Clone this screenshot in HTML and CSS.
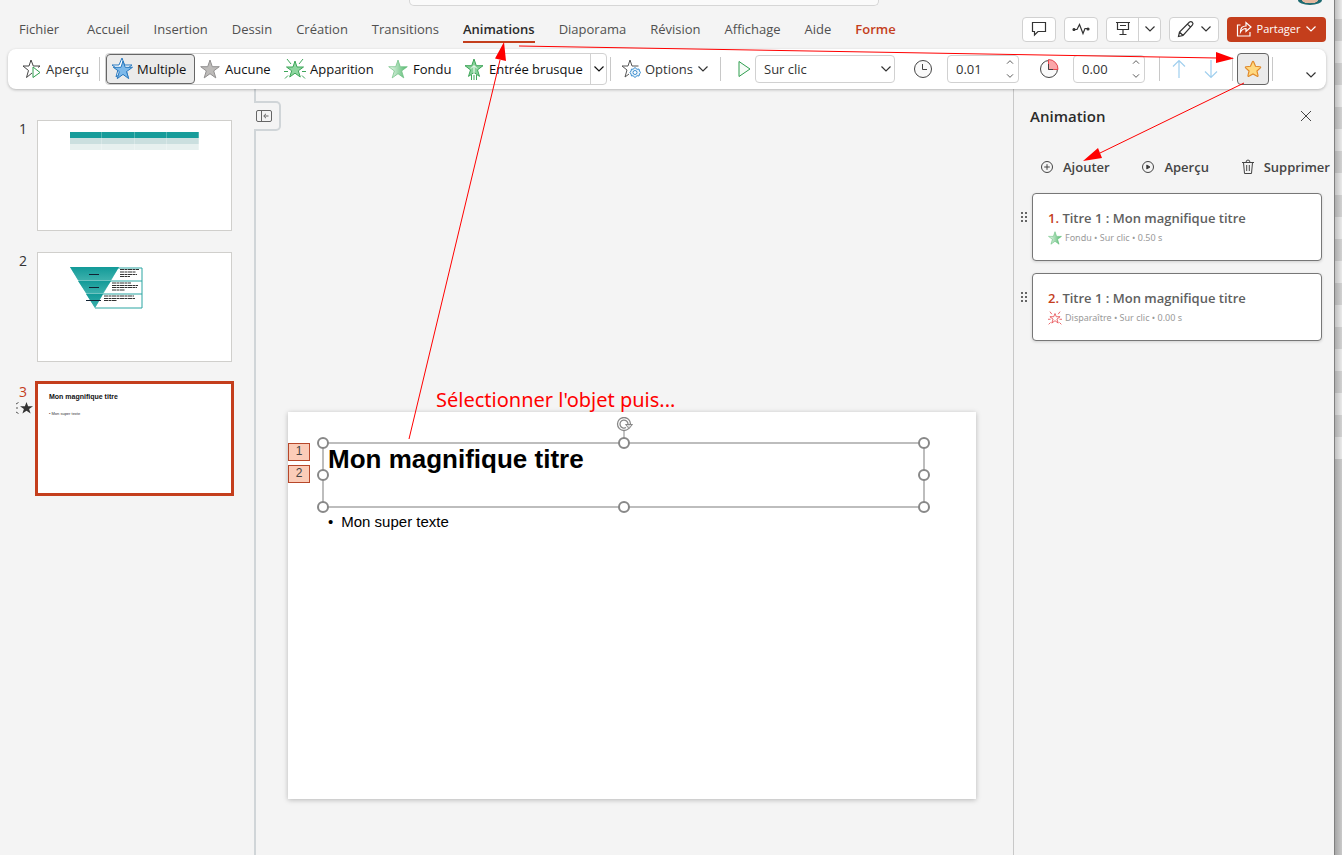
FILE: index.html
```html
<!DOCTYPE html>
<html lang="fr">
<head>
<meta charset="utf-8">
<title>Animations</title>
<link rel="stylesheet" href="styles.css">
</head>
<body>
<svg class="defs" aria-hidden="true">
  <defs>
    <linearGradient id="fade"><stop offset="0" stop-color="#f2faf3"/><stop offset="1" stop-color="#4fb86a"/></linearGradient>
    <linearGradient id="teal" x1="0" y1="0" x2="0" y2="1"><stop offset="0" stop-color="#129a98"/><stop offset="1" stop-color="#3cb0ac"/></linearGradient>
    <symbol id="star" viewBox="0 0 20 20"><path d="M10 1l2.300 6.700H19.300l-5.600 4.200 2.100 7L10 14.700l-5.800 4.200 2.100-7L.7 7.700H7.700z"/></symbol>
    <symbol id="chevron" viewBox="0 0 12 12"><path d="M1.500 3.500L6 8l4.500-4.500" fill="none" stroke="currentColor" stroke-width="1.200"/></symbol>
    <symbol id="grip" viewBox="0 0 8 12"><path d="M1 1h2v2H1zM5 1h2v2H5zM1 5h2v2H1zM5 5h2v2H5zM1 9h2v2H1zM5 9h2v2H5z" fill="#666"/></symbol>
  </defs>
</svg>

<div class="app">
  <header class="top">
    <div class="title-bar"><div class="search"></div><div class="avatar"></div></div>
    <div class="menu">
      <nav class="tabs">
        <a class="first" href="#">Fichier</a><a href="#">Accueil</a><a href="#">Insertion</a><a href="#">Dessin</a><a href="#">Création</a><a href="#">Transitions</a><a class="active" href="#">Animations</a><a href="#">Diaporama</a><a href="#">Révision</a><a href="#">Affichage</a><a href="#">Aide</a><a class="context" href="#">Forme</a>
      </nav>
      <div class="actions">
        <button class="btn" aria-label="Commentaires"><svg width="16" height="16" viewBox="0 0 16 16"><path d="M1.500 1.500h13v9H7l-3.500 3.500v-3.500h-2z"/></svg></button>
        <button class="btn" aria-label="Activité"><svg width="18" height="16" viewBox="0 0 18 16"><path d="M2 8.500h3l2.500-5 3.500 9 2-5h3"/><circle cx="2" cy="8.500" r="1" fill="#333"/><circle cx="16" cy="8" r="1" fill="#333"/></svg></button>
        <div class="split">
          <button aria-label="Présenter"><svg width="16" height="16" viewBox="0 0 16 16"><path d="M1 1.500h14M2.500 1.500V8.500h11V1.500M5 4.500h6M8 8.500v5M4.500 13.500h7"/></svg></button>
          <button class="drop" aria-label="Options de présentation"><svg width="12" height="12"><use href="#chevron"/></svg></button>
        </div>
        <button class="btn edit" aria-label="Édition"><svg width="18" height="18" viewBox="0 0 18 18"><path d="M1.500 16.500l1-4.500L12.500 2q1.500-1 2.800.2t.2 2.800L6 15.500zM10.500 4l3.300 3.300M2.500 12l3.500 3.500"/></svg><svg width="12" height="12"><use href="#chevron"/></svg></button>
        <button class="share"><svg width="16" height="16" viewBox="0 0 16 16"><path d="M4.500 4H1.500v11h12.500V11M4.500 11q0-6 5.500-6V1.500L15 6l-5 4.500V7.500q-3.500 0-5.500 3.500z"/></svg>Partager<svg width="12" height="12"><use href="#chevron"/></svg></button>
      </div>
    </div>
  </header>

  <div class="ribbon">
    <button class="tool preview"><svg width="20" height="20" viewBox="0 0 20 20"><path d="M9 1l2.300 6H18l-2 1.500M10 14l-5.500 4.500 2-7L1 7h6l2-6" fill="none" stroke="#444"/><path d="M11 8v10.500l7-5z" fill="#fff" stroke="#2f9e4f"/></svg>Aperçu</button>
    <span class="rule"></span>
    <div class="gallery">
      <button class="selected"><svg class="blue" width="22" height="22" viewBox="0 0 22 22"><g fill="#7db9ea" stroke="#2878be"><path d="M11 0l2.500 7H21l-6 4.500 2 7.500-6-4.500L5 19l2-7.500L1 7h7z" fill="#fff"/><path d="M12 3l2.200 6.300H21.500l-6 4.300 2.200 7-5.700-4.200-5.700 4.200 2-7-6-4.300H10z"/></g></svg>Multiple</button>
      <button><svg class="grey" width="20" height="20"><use href="#star"/></svg>Aucune</button>
      <button class="wide"><svg width="22" height="22" viewBox="0 0 22 22"><path d="M11 3l2 6h6.500l-5.200 3.800 2 6.200-5.300-3.800L5.700 19l2-6.200L2.500 9H9z" fill="#8fd6a0" stroke="#3fa65a"/><path d="M3 1l4 5M19 1l-4 5M0 13.500h4M22 13.500h-4M1 20.500l3-3M21 20.500l-3-3" fill="none" stroke="#3fa65a"/></svg>Apparition</button>
      <button class="narrow"><svg class="fade" width="20" height="20"><use href="#star"/></svg>Fondu</button>
      <button class="long"><svg width="20" height="22" viewBox="0 0 20 22"><path d="M10 1l2.300 6.700H19l-5.500 4.200 2 6.500L10 14.500l-5.500 3.900 2-6.500L1 7.700h6.700z" fill="#86d199" stroke="#3fa65a"/><path d="M10 15V8M7 10.500L10 7.500l3 3" fill="none" stroke="#fff"/><path d="M7.500 17v5M10 17v5M12.500 17v5" stroke="#3fa65a"/></svg>Entrée brusque</button>
      <button class="more" aria-label="Plus d'animations"><svg width="12" height="12"><use href="#chevron"/></svg></button>
    </div>
    <span class="rule close"></span>
    <button class="tool options"><svg width="20" height="20" viewBox="0 0 20 20"><path d="M17.500 7H11L9 1 7 7H1l5 4-2 7 4-3" fill="none" stroke="#555"/><path d="M10.500 10l1.500.3 2-1.800 2 1.800 2-.3.500 2 1 1.500-1 1.500-.5 2-2-.3-2 1.800-2-1.800-1.500.3-.5-2-1-1.500 1-1.500z" fill="#e9f4fc" stroke="#3c8ecf"/><circle cx="14" cy="13.500" r="2" fill="#fff" stroke="#3c8ecf"/></svg>Options<svg width="12" height="12"><use href="#chevron"/></svg></button>
    <span class="rule"></span>
    <div class="start">
      <svg width="13" height="18" viewBox="0 0 13 18"><path d="M1 1.500v15L12 9z" fill="#f6fcf7" stroke="#2f9e4f"/></svg>
      <span class="select"><select aria-label="Début"><option>Sur clic</option></select><svg width="12" height="12"><use href="#chevron"/></svg></span>
    </div>
    <label class="timing"><svg width="20" height="20" viewBox="0 0 20 20"><circle cx="10" cy="10" r="8.500" fill="#fafafa" stroke="#444"/><path d="M9.500 5v5.500H14" fill="none" stroke="#444"/></svg>
      <span class="number"><input aria-label="Durée" value="0.01"><span class="spin"><svg class="up" width="8" height="8"><use href="#chevron"/></svg><svg width="8" height="8"><use href="#chevron"/></svg></span></span></label>
    <label class="timing"><svg width="20" height="20" viewBox="0 0 20 20"><circle cx="10" cy="10" r="8.500" fill="#fafafa" stroke="#444"/><path d="M9.500.5a9.500 9.500 0 0 1 9.500 10H9.500z" fill="#fba6a9" stroke="#e8474f"/><path d="M9.500 5v5.500H14" fill="none" stroke="#444"/></svg>
      <span class="number"><input aria-label="Délai" value="0.00"><span class="spin"><svg class="up" width="8" height="8"><use href="#chevron"/></svg><svg width="8" height="8"><use href="#chevron"/></svg></span></span></label>
    <span class="rule"></span>
    <div class="moves">
      <button aria-label="Monter"><svg width="14" height="20" viewBox="0 0 14 20"><path d="M7 19V1.500M1 7.500l6-6 6 6"/></svg></button>
      <button aria-label="Descendre"><svg width="14" height="20" viewBox="0 0 14 20"><path d="M7 1v17.500M1 12.500l6 6 6-6"/></svg></button>
    </div>
    <span class="rule close"></span>
    <button class="pane-toggle" aria-label="Volet Animation"><svg width="18" height="18" viewBox="0 0 20 20"><path d="M10 1.500q.5 0 .8.700l2 4.800 5 .5q1.200.2.400 1.200l-3.800 3.500 1.200 5.200q.1 1.200-1 .7L10 15.500l-4.600 2.600q-1.100.5-1-.7l1.200-5.200-3.800-3.500q-.8-1 .4-1.200l5-.5 2-4.800q.3-.7.8-.7z" fill="#ffd980" stroke="#e08a2c" stroke-width="1.300"/></svg></button>
    <span class="rule close"></span>
    <button class="collapse" aria-label="Réduire le ruban"><svg width="12" height="12"><use href="#chevron"/></svg></button>
  </div>

  <main class="work">
    <aside class="slides">
      <div class="item"><span class="index">1</span>
        <div class="thumb"><div class="mini-table"><i></i><i></i><i></i><i></i></div></div></div>
      <div class="item"><span class="index">2</span>
        <div class="thumb"><svg class="pyramid" width="73" height="43" viewBox="0 0 73 43">
          <path d="M48 1h24v40H25" fill="#fff" stroke="#2ba5a2"/><path d="M36 14h36M31 27h41" stroke="#2ba5a2"/>
          <path d="M0 0h49L25 41z" fill="#6fc3c0"/><path d="M0 0h49L41 13H8z" fill="url(#teal)"/><path d="M8 14h33l-8 12H16z" fill="url(#teal)"/><path d="M16 27h17l-8 14z" fill="url(#teal)"/>
          <path d="M19 7.500h10M19 20.500h10M16 33.500h15" stroke="#123"/>
          <path d="M50 2.500h19M50 5h16M50 7.500h17M50 9.500h10M42 16h19M42 18.500h26M42 20.500h25M42 23h13M34 29h30M34 31.500h31M34 33.500h13" stroke="#333" stroke-dasharray="4 .5 3 .5"/></svg></div></div>
      <div class="item current"><span class="index">3<svg width="18" height="14" viewBox="0 0 18 14"><path d="M11.500 1l1.600 4.200H18l-3.900 2.700 1.500 4.600-4.100-2.800-4.100 2.800 1.500-4.600L5 5.200h4.900z" fill="#333"/><path d="M3.500 1.500L1 3M1 7h2M1 11l2.500 1.500" stroke="#555" fill="none"/></svg></span>
        <div class="thumb"><b>Mon magnifique titre</b><small>• Mon super texte</small></div></div>
    </aside>

    <section class="canvas">
      <button class="pane-tab" aria-label="Masquer le volet"><svg width="17" height="13" viewBox="0 0 17 13"><rect x=".5" y=".5" width="15" height="11" rx="1.500" fill="none" stroke="#666"/><path d="M5.500 1v10M12.500 6H8M10 3.800L7.700 6 10 8.200" fill="none" stroke="#666"/></svg></button>
      <div class="slide">
        <span class="order">1</span><span class="order second">2</span>
        <div class="title-box">
          <h1>Mon magnifique titre</h1>
          <svg class="rotate" width="18" height="26" viewBox="0 0 18 26"><path d="M8 14v12" stroke="#888"/><circle cx="8" cy="7" r="6.500" fill="#fff" stroke="#888" stroke-width="1.300"/><path d="M12 7a4 4 0 1 0-2 3.500" fill="none" stroke="#888" stroke-width="1.300"/><path d="M9.500 7.500h7L13 11.500z" fill="#ddd" stroke="#888"/></svg>
          <i class="knob l t"></i><i class="knob c t"></i><i class="knob r t"></i><i class="knob l m"></i><i class="knob r m"></i><i class="knob l b"></i><i class="knob c b"></i><i class="knob r b"></i>
        </div>
        <ul><li>Mon super texte</li></ul>
      </div>
    </section>

    <aside class="anim">
      <div class="anim-head"><h2>Animation</h2><button aria-label="Fermer"><svg width="12" height="12" viewBox="0 0 12 12"><path d="M1 1l10 10M11 1L1 11"/></svg></button></div>
      <div class="anim-tools">
        <button><svg width="14" height="14" viewBox="0 0 14 14"><circle cx="7" cy="7" r="5.500"/><path d="M7 4.200v5.600M4.200 7h5.600"/></svg>Ajouter</button>
        <button><svg width="14" height="14" viewBox="0 0 14 14"><circle cx="7" cy="7" r="5.500"/><path d="M5.800 5v4L9 7z" fill="#333"/></svg>Aperçu</button>
        <button><svg width="14" height="16" viewBox="0 0 14 16"><path d="M1 3.500h12M5 3.500q0-2.500 2-2.500t2 2.500M2.500 3.500l1 11h7l1-11M5.700 6v6M8.300 6v6"/></svg>Supprimer</button>
      </div>
      <div class="effect"><svg class="grip" width="8" height="12"><use href="#grip"/></svg>
        <article><h3><b>1.</b> Titre 1 : Mon magnifique titre</h3>
          <p><svg class="fade" width="14" height="14"><use href="#star"/></svg>Fondu • Sur clic • 0.50 s</p></article></div>
      <div class="effect"><svg class="grip" width="8" height="12"><use href="#grip"/></svg>
        <article><h3><b>2.</b> Titre 1 : Mon magnifique titre</h3>
          <p><svg width="14" height="14" viewBox="0 0 22 22"><g fill="none" stroke="#e5484d" stroke-width="1.300"><path d="M11 4l2 5h6l-5 3.800 2 6.200-5-3.800L6 19l2-6.200L3 9h6z"/><path d="M3 1l3 4M19 1l-3 4M0 13h4M22 13h-4M1 21l3-3M21 21l-3-3"/></g></svg>Disparaître • Sur clic • 0.00 s</p></article></div>
    </aside>
  </main>
</div>
<div class="backdrop"></div>

<svg class="arrows" width="1342" height="200" viewBox="0 0 1342 200" aria-hidden="true">
  <g stroke="#f00" fill="#f00"><path d="M409 439L500 60M519 46l698 12M1244 83l-144 70" fill="none"/>
  <path d="M504 42l2 19-11-2.500zM1234 58.500l-18 4.500V52zM1083 161l15-13 4 10z" stroke="none"/></g>
</svg>
<p class="note">Sélectionner l'objet puis...</p>
</body>
</html>
```
FILE: styles.css
```css
* { box-sizing: border-box; }
body {
  margin: 0;
  min-height: 100vh;
  display: flex;
  position: relative;
  overflow: hidden;
  background: #f4f4f4;
  color: #333;
  font: 13px/20px "Open Sans", "Noto Sans", sans-serif;
}
button, input, select { font: inherit; color: inherit; }
button {
  display: flex;
  align-items: center;
  justify-content: center;
  padding: 0;
  border: 0;
  background: none;
}
svg { flex: none; display: block; }
h1, h2, h3, p, ul { margin: 0; padding: 0; }
.defs { position: absolute; width: 0; height: 0; }
.app { flex: 1; min-width: 0; display: flex; flex-direction: column; }

/* Right edge of the window behind */
.backdrop {
  width: 8px;
  border-left: 1px solid #808080;
  background:
    linear-gradient(90deg, rgba(0,0,0,.18), transparent),
    linear-gradient(#cacaca, #cacaca) 0 459px no-repeat,
    repeating-linear-gradient(#eaeaea 0 19px, #d2d2d2 19px 41px, #eaeaea 41px 44px);
}

/* Title bar and tabs */
.title-bar { height: 6px; display: flex; position: relative; justify-content: flex-end; }
.search {
  position: absolute;
  left: 409px;
  width: 470px;
  height: 6px;
  border: 1px solid #d6d6d6;
  border-top: 0;
  border-radius: 0 0 5px 5px;
  background: #fafafa;
}
.avatar {
  width: 24px;
  height: 5px;
  margin-right: 12px;
  border-radius: 0 0 12px 12px / 0 0 5px 5px;
  background: radial-gradient(ellipse at 50% 0, #e3b79e 0 45%, #1d6a70 50%);
}
.menu { display: flex; height: 43px; padding: 0 8px 0 19px; align-items: center; justify-content: space-between; }
.tabs { display: flex; gap: 24px; margin-top: 4px; }
.tabs a { color: #505050; text-decoration: none; line-height: 24px; border-bottom: 2px solid transparent; }
.tabs .first { margin-right: 4px; }
.tabs .active { color: #2b2b2b; font-weight: 600; border-color: #c43e1c; }
.tabs .context { color: #c43e1c; font-weight: 600; }
.actions { display: flex; gap: 8px; margin-top: 3px; }
.actions svg { fill: none; stroke: #333; stroke-width: 1.2; }
.btn, .split { height: 25px; border: 1px solid #d1d1d1; border-radius: 4px; background: #fff; }
.btn { width: 34px; }
.split { display: flex; width: 55px; }
.split button { flex: 1; }
.split .drop { flex: none; width: 22px; border-left: 1px solid #d1d1d1; }
.edit { width: 50px; gap: 5px; }
.share { width: 99px; height: 25px; gap: 5px; border-radius: 4px; background: #c43e1c; color: #fff; font-size: 11px; }
.actions .share svg { stroke: #fff; }

/* Ribbon */
.ribbon {
  display: flex;
  align-items: center;
  height: 40px;
  margin: 0 8px;
  padding: 0 9px 0 13px;
  border-radius: 8px;
  background: #fff;
  box-shadow: 0 1px 3px rgba(0,0,0,.25);
  position: relative;
}
.rule { width: 1px; height: 24px; margin: 0 5px 0 9px; background: #c8c8c8; }
.rule.close { margin: 0 4px 0 3px; }
.tool { gap: 4px; }
.preview { width: 69px; }
.gallery { display: flex; height: 32px; border: 1px solid #d1d1d1; border-radius: 4px; width: 502px; flex: none; }
.gallery button { width: 84px; padding-left: 5px; gap: 5px; justify-content: flex-start; color: #111; white-space: nowrap; }
.gallery .selected { width: 89px; gap: 4px; padding-left: 4px; border: 1px solid #666; border-radius: 4px; background: #ebebeb; }
.gallery .wide { width: 104px; gap: 4px; }
.gallery .narrow { width: 76px; }
.gallery .long { flex: 1; }
.gallery .more { width: 16px; padding: 0; justify-content: center; border-left: 1px solid #d1d1d1; }
.grey { fill: #bdbbb9; stroke: #929090; }
.fade { fill: url(#fade); stroke: #6cbf80; stroke-width: .7; }
.options { width: 96px; gap: 4px; padding-left: 4px; }
.start { display: flex; align-items: center; gap: 4px; padding-left: 12px; }
.select, .number { display: flex; align-items: center; height: 28px; border: 1px solid #d1d1d1; border-radius: 4px; background: #fff; }
.select { width: 140px; padding-right: 2px; }
.select select { flex: 1; min-width: 0; padding: 0 8px; border: 0; background: none; appearance: none; }
.timing { display: flex; align-items: center; gap: 14px; padding-left: 18px; }
.timing + .timing { padding-left: 20px; }
.number { width: 72px; padding-right: 4px; }
.number input { flex: 1; min-width: 0; padding: 0 8px; border: 0; background: none; }
.spin { display: flex; flex-direction: column; gap: 6px; }
.spin svg { stroke-width: 2; }
.up { transform: rotate(180deg); }
.timing + .rule { margin: 0 12px 0 14px; }
.moves { display: flex; gap: 18px; margin-right: 11px; }
.moves svg { fill: none; stroke: #a0cfee; stroke-width: 1.2; }
.pane-toggle { width: 32px; height: 32px; border: 1px solid #666; border-radius: 4px; background: #ebebeb; }
.collapse { margin-left: auto; padding-top: 12px; }

/* Slide list */
.work { flex: 1; display: flex; min-height: 0; }
.slides { width: 256px; padding: 31px 22px 0 0; border-right: 2px solid #d0d5d8; flex: none; }
.item { display: flex; margin-bottom: 21px; }
.index { width: 37px; padding-left: 19px; font-size: 14px; line-height: 18px; flex: none; }
.thumb { flex: 1; aspect-ratio: 195 / 111; border: 1px solid #d0cfcc; background: #fff; }
.item:nth-child(2) .thumb { aspect-ratio: 195 / 110; }
.mini-table { display: grid; grid-template-columns: repeat(4, 1fr); width: 129px; margin: 11px 0 0 32px; }
.mini-table i { height: 18px; border-right: 1px solid rgba(255,255,255,.25); background: linear-gradient(#179c9a 0 6px, #cbdfdf 6px 12px, #e7f0ef 12px); }
.pyramid { margin: 14px 0 0 32px; }
.current { margin: -2px -2px 0 0; }
.current .index { width: 35px; padding-top: 2px; color: #c43e1c; }
.current .thumb { border: 3px solid #c43e1c; aspect-ratio: 199 / 115; padding: 7px 11px; font-family: "Liberation Sans", sans-serif; color: #111; }
.current b { display: block; font-size: 7px; line-height: 12px; }
.current small { display: block; margin-top: 8px; font-size: 4px; line-height: 6px; color: #333; }
.current .index svg { margin-left: -4px; }

/* Canvas */
.canvas { flex: 1; position: relative; min-width: 0; padding: 323px 37px 0 32px; }
.pane-tab {
  position: absolute;
  left: -2px;
  top: 12px;
  width: 27px;
  height: 30px;
  padding-right: 4px;
  border: 2px solid #d0d5d8;
  border-left: 0;
  border-radius: 0 5px 5px 0;
  background: #f4f4f4;
}
.slide {
  position: relative;
  aspect-ratio: 16 / 9;
  padding: 30px 51px 0 34px;
  background: #fff;
  box-shadow: 0 1px 5px rgba(0,0,0,.25);
  font-family: "Liberation Sans", sans-serif;
  color: #000;
}
.order {
  position: absolute;
  left: 0;
  top: 31px;
  width: 22px;
  height: 18px;
  border: 1px solid #b7472a;
  background: #fbccb8;
  color: #444;
  font-size: 12px;
  line-height: 15px;
  text-align: center;
}
.order.second { top: 53px; }
.title-box { position: relative; height: 66px; border: 2px solid #bdbdbd; padding-left: 4px; }
h1 { font-size: 26px; line-height: 31px; }
.rotate { position: absolute; left: calc(50% - 8px); top: -27px; }
.knob { position: absolute; width: 12px; height: 12px; border: 2px solid #888; border-radius: 50%; background: #fff; }
.l { left: -7px; } .c { left: calc(50% - 6px); } .r { right: -7px; }
.t { top: -7px; } .m { top: calc(50% - 6px); } .b { bottom: -7px; }
.slide ul { list-style: none; padding: 5px 6px; font-size: 15px; line-height: 18px; }
.slide li::before { content: "•"; margin-right: 8px; }

/* Animation pane */
.anim { width: 321px; flex: none; padding: 17px 12px 0 0; border-left: 1px solid #c8c8c8; }
.anim-head { display: flex; justify-content: space-between; padding: 0 10px 0 16px; }
h2 { font-size: 15px; line-height: 20px; font-weight: 600; color: #2b2b2b; }
.anim svg { fill: none; stroke: #444; }
.anim-tools { display: flex; justify-content: space-between; margin: 31px -8px 16px 26px; }
.anim-tools button { gap: 9px; font-weight: 600; line-height: 20px; color: #444; }
.effect { display: flex; margin-bottom: 12px; }
.grip { margin: 18px 4px 0 6px; }
.anim .grip { stroke: none; }
.effect article { flex: 1; height: 68px; padding: 14px 15px; border: 1px solid #777; border-radius: 4px; background: #fff; box-shadow: 0 1px 3px rgba(0,0,0,.15); }
h3 { font-size: 13px; line-height: 20px; font-weight: 600; color: #606060; }
h3 b { color: #c43e1c; font-weight: 600; }
.effect p { display: flex; align-items: center; gap: 3px; font-family: "Noto Sans", sans-serif; font-size: 9px; line-height: 20px; color: #999; }
.anim .fade { fill: url(#fade); stroke: #4fb86a; }

/* Annotations over the page */
.arrows { position: absolute; left: 0; top: 0; overflow: visible; pointer-events: none; }
.note { position: absolute; left: 436px; top: 386px; color: #f00; font-family: "Noto Sans", sans-serif; font-size: 20px; line-height: 28px; }
```
